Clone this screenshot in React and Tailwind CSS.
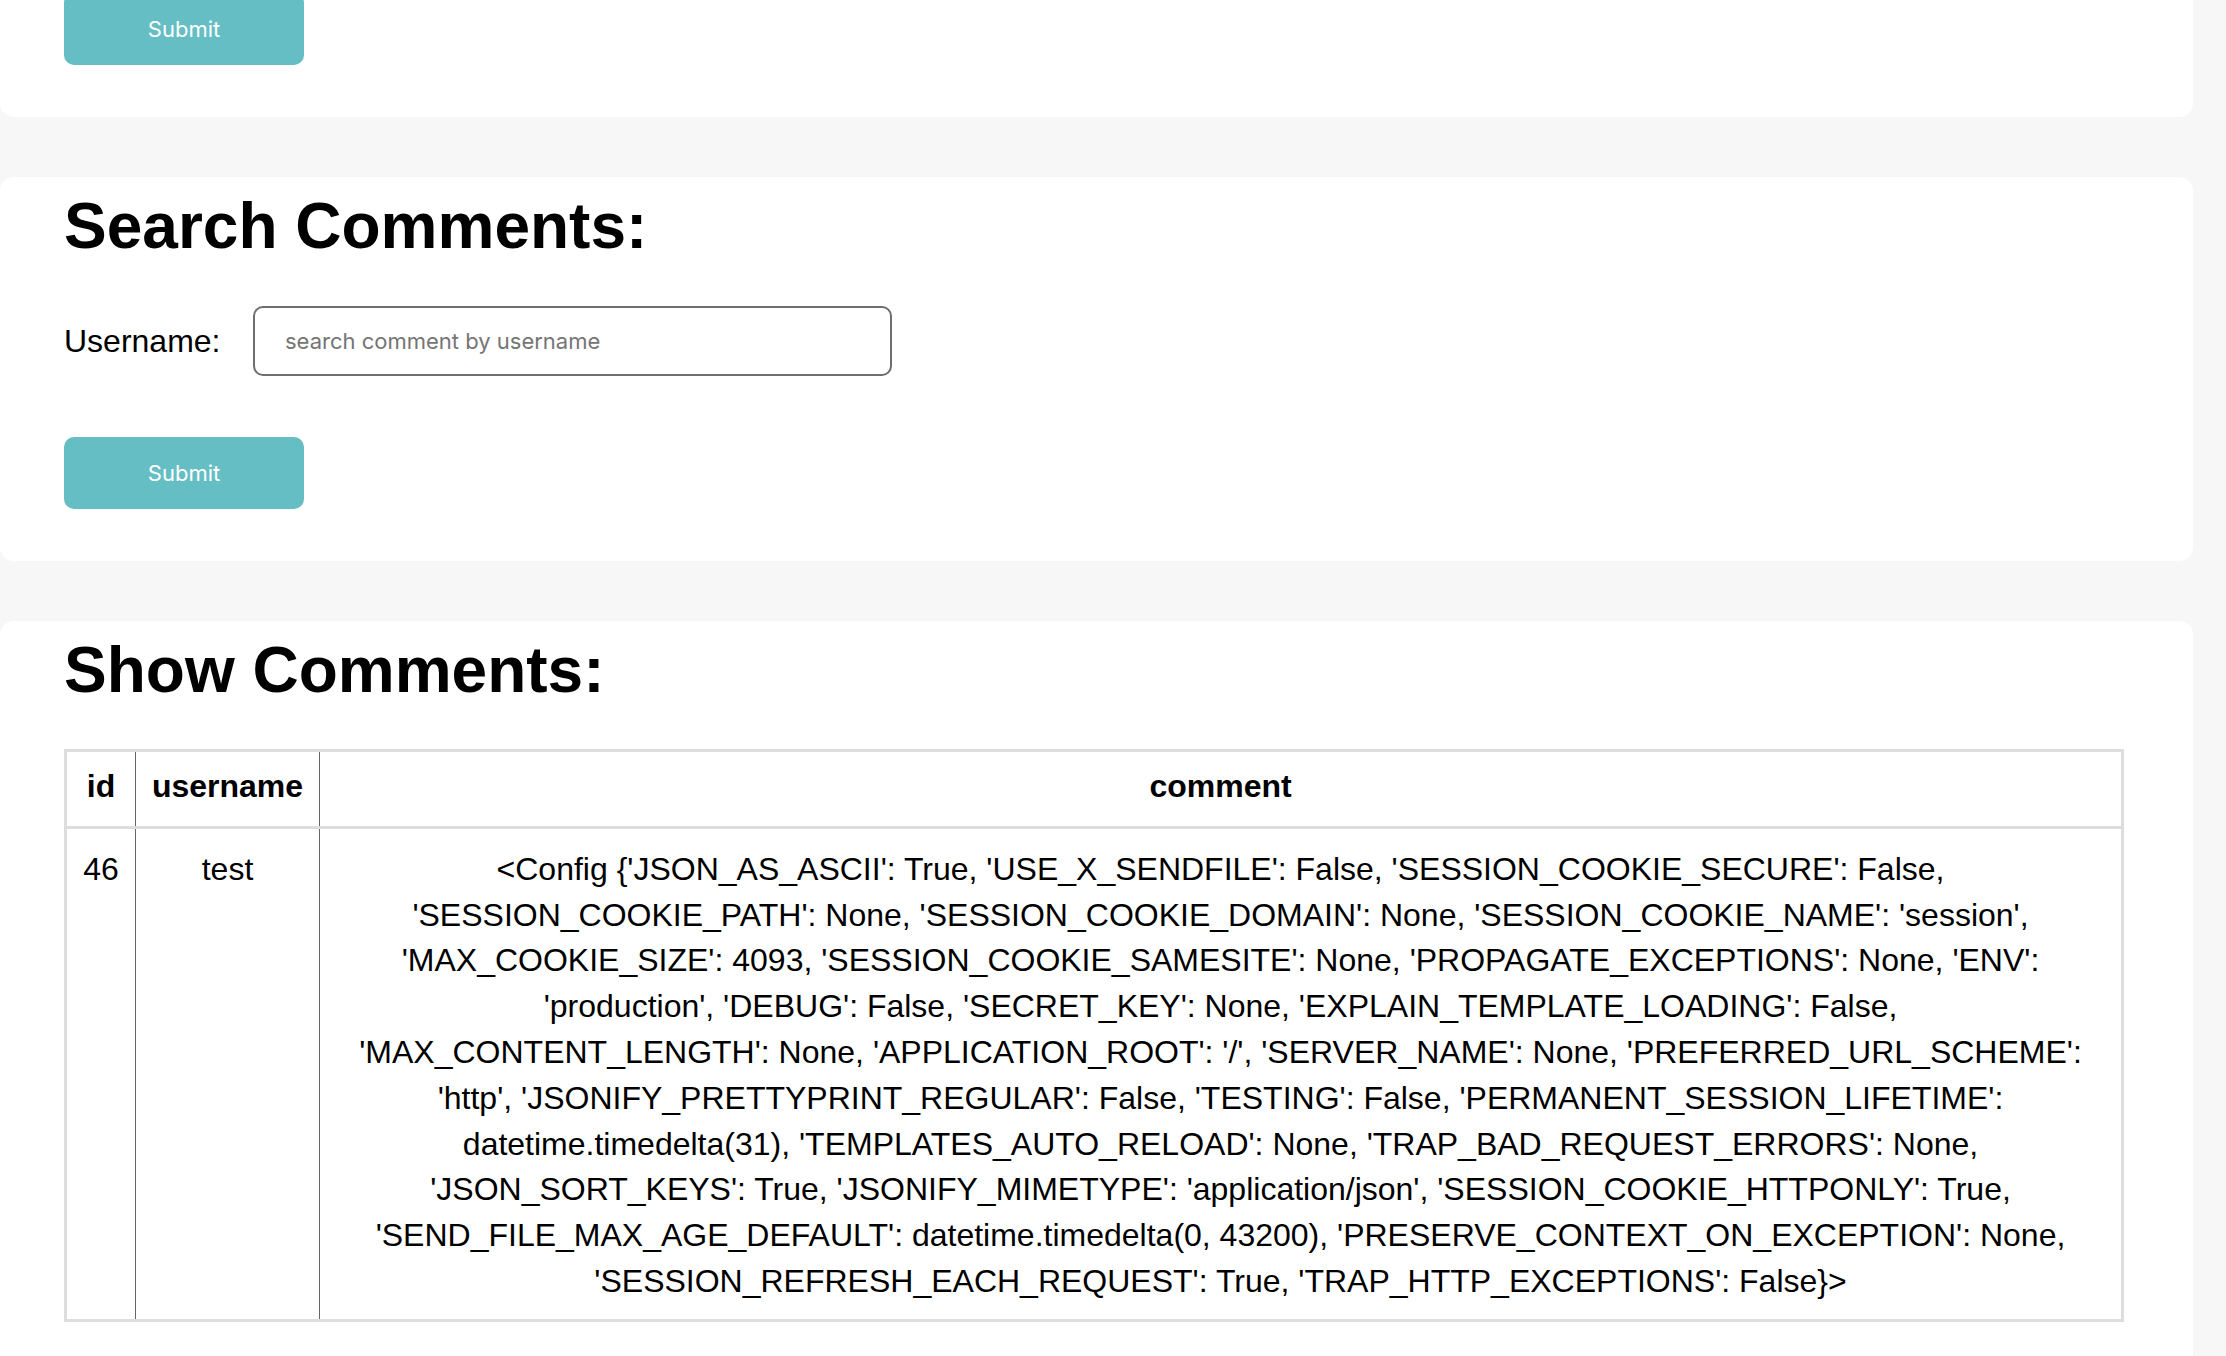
import React from "react";

const commentLines = [
  "<Config {'JSON_AS_ASCII': True, 'USE_X_SENDFILE': False, 'SESSION_COOKIE_SECURE': False,",
  "'SESSION_COOKIE_PATH': None, 'SESSION_COOKIE_DOMAIN': None, 'SESSION_COOKIE_NAME': 'session',",
  "'MAX_COOKIE_SIZE': 4093, 'SESSION_COOKIE_SAMESITE': None, 'PROPAGATE_EXCEPTIONS': None, 'ENV':",
  "'production', 'DEBUG': False, 'SECRET_KEY': None, 'EXPLAIN_TEMPLATE_LOADING': False,",
  "'MAX_CONTENT_LENGTH': None, 'APPLICATION_ROOT': '/', 'SERVER_NAME': None, 'PREFERRED_URL_SCHEME':",
  "'http', 'JSONIFY_PRETTYPRINT_REGULAR': False, 'TESTING': False, 'PERMANENT_SESSION_LIFETIME':",
  "datetime.timedelta(31), 'TEMPLATES_AUTO_RELOAD': None, 'TRAP_BAD_REQUEST_ERRORS': None,",
  "'JSON_SORT_KEYS': True, 'JSONIFY_MIMETYPE': 'application/json', 'SESSION_COOKIE_HTTPONLY': True,",
  "'SEND_FILE_MAX_AGE_DEFAULT': datetime.timedelta(0, 43200), 'PRESERVE_CONTEXT_ON_EXCEPTION': None,",
  "'SESSION_REFRESH_EACH_REQUEST': True, 'TRAP_HTTP_EXCEPTIONS': False}>",
];

const comments = [{ id: 46, username: "test", comment: commentLines }];

const SubmitButton = ({ className = "" }) => (
  <button
    type="button"
    className={`w-[240px] h-[72px] shrink-0 rounded-[10px] bg-[#64bec4] text-white text-[22px] font-['Inter',sans-serif] ${className}`}
  >
    Submit
  </button>
);

const App = () => {
  return (
    <div className="min-h-screen bg-[#f7f7f7] text-black font-['Liberation_Sans',Arial,sans-serif] overflow-hidden">
      <div className="w-[2193px] flex flex-col gap-[60px]">
        <section className="flex flex-col bg-white rounded-b-[14px] px-[64px] pb-[52px]">
          <SubmitButton className="-mt-[7px]" />
        </section>

        <section className="flex flex-col items-start bg-white rounded-[14px] px-[64px] pt-[14px] pb-[52px]">
          <h1 className="text-[64px] leading-[70px] font-bold">Search Comments:</h1>
          <div className="flex items-center mt-[45px]">
            <label className="w-[189px] shrink-0 text-[32px] leading-[46px]">Username:</label>
            <input
              type="text"
              placeholder="search comment by username"
              className="w-[639px] h-[70px] rounded-[10px] border-2 border-[#6e6e6e] px-[30px] text-[22px] font-['Inter',sans-serif] placeholder:text-[#757575] outline-none"
            />
          </div>
          <SubmitButton className="mt-[61px]" />
        </section>

        <section className="flex flex-col items-start bg-white rounded-t-[14px] px-[64px] pt-[14px] pb-[60px]">
          <h1 className="text-[64px] leading-[70px] font-bold">Show Comments:</h1>
          <table className="mt-[44px] w-[2060px] border-collapse border-[3px] border-[#dddddd] text-[32px] leading-[45.8px] text-center">
            <thead>
              <tr className="border-b-[3px] border-[#dddddd]">
                <th className="w-[70px] pt-[12px] pb-[16px] font-bold border-r border-[#666666]">id</th>
                <th className="w-[184px] pt-[12px] pb-[16px] font-bold border-r border-[#666666]">username</th>
                <th className="pt-[12px] pb-[16px] font-bold">comment</th>
              </tr>
            </thead>
            <tbody>
              {comments.map((c) => (
                <tr key={c.id} className="align-top">
                  <td className="pt-[18px] pb-[14px] border-r border-[#666666]">{c.id}</td>
                  <td className="pt-[18px] pb-[14px] border-r border-[#666666]">{c.username}</td>
                  <td className="pt-[18px] pb-[14px] px-[16px]">
                    {c.comment.map((line, i) => (
                      <React.Fragment key={i}>
                        {line}
                        {i < c.comment.length - 1 && <br />}
                      </React.Fragment>
                    ))}
                  </td>
                </tr>
              ))}
            </tbody>
          </table>
        </section>
      </div>
    </div>
  );
};

export default App;
